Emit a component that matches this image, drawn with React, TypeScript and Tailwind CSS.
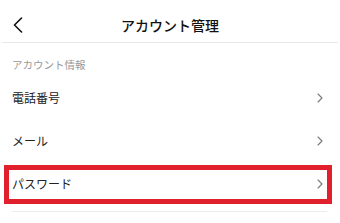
import React from 'react';

const Chevron = () => (
  <svg width="6" height="10" viewBox="0 0 6 10" fill="none" className="shrink-0">
    <path d="M1 1l4 4-4 4" stroke="#7a7a7a" strokeWidth="1.1" strokeLinecap="round" strokeLinejoin="round" />
  </svg>
);

const Row = ({ label }: { label: string }) => (
  <div className="h-[43px] pl-3 pr-[17px] flex items-center justify-between">
    <span className="text-[12px] text-[#222]">{label}</span>
    <Chevron />
  </div>
);

export default function App() {
  return (
    <div
      className="relative w-[340px] h-[223px] bg-white overflow-hidden"
      style={{ fontFamily: '"Noto Sans CJK JP", "Noto Sans", sans-serif' }}
    >
      <div className="h-[43px] relative flex items-center justify-center border-b border-[#e8e8e8] mx-[2px]">
        <svg width="10" height="16" viewBox="0 0 10 16" fill="none" className="absolute left-[11px] top-[17px]">
          <path d="M8.5 1L1.5 8l7 7" stroke="#111" strokeWidth="1.6" strokeLinecap="round" strokeLinejoin="round" />
        </svg>
        <h1 className="text-[14px] font-medium text-[#111] pt-[8px]">アカウント管理</h1>
      </div>

      <div className="h-[33px] pl-3 pt-[15px] text-[10.5px] leading-[14px] text-[#999]">アカウント情報</div>

      <Row label="電話番号" />
      <Row label="メール" />
      <Row label="パスワード" />

      <div className="mt-[6px] ml-3 mr-[13px] border-b border-[#ececec]" />

      <div className="absolute left-[4px] top-[165px] w-[328px] h-[39px] border-[5px] border-[#e0202c]" />
    </div>
  );
}
